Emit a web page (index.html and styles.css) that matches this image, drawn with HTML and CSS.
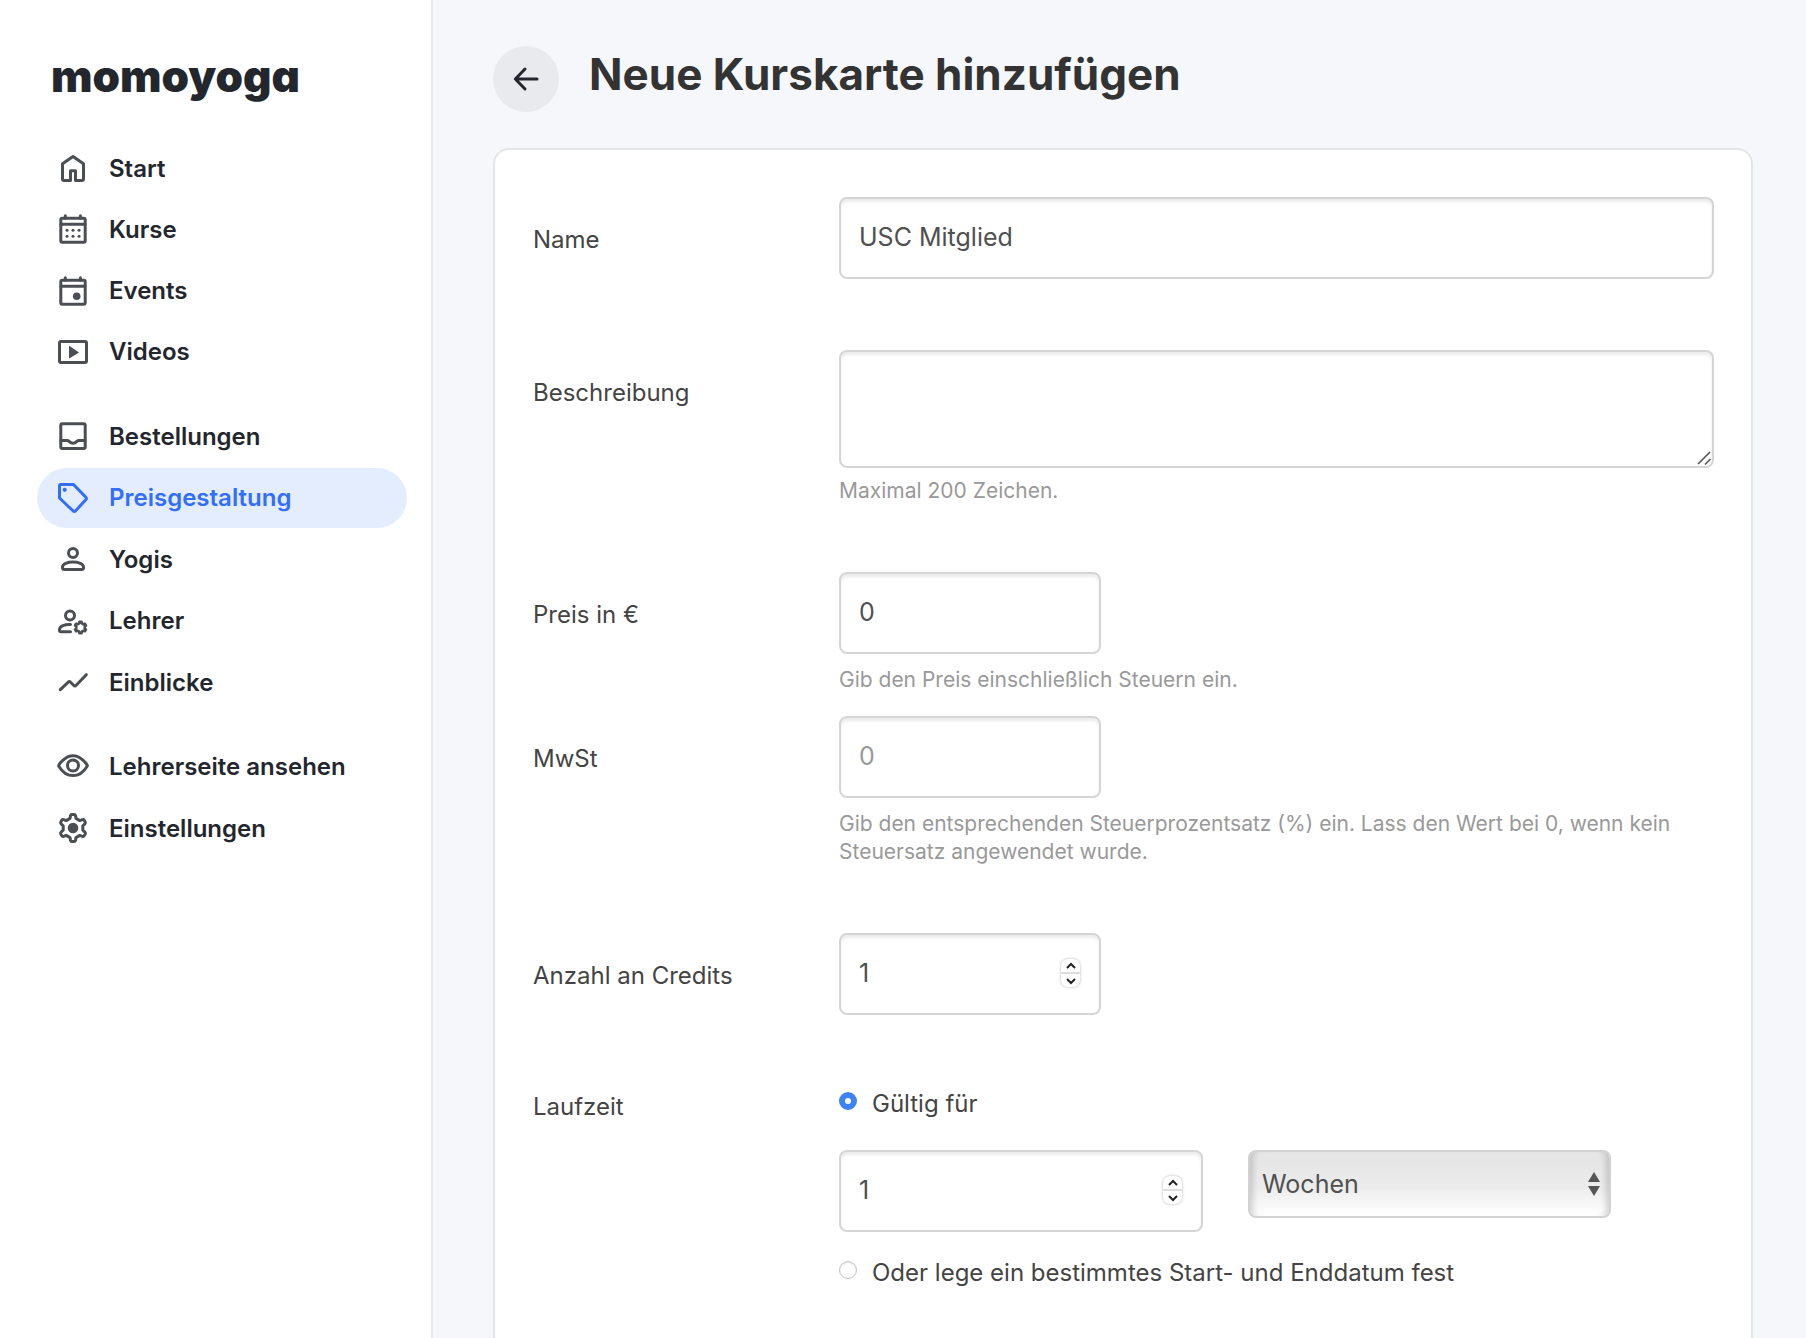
FILE: index.html
```html
<!DOCTYPE html>
<html lang="de">
<head>
<meta charset="utf-8">
<meta name="viewport" content="width=device-width, initial-scale=1">
<title>Neue Kurskarte hinzufügen – momoyoga</title>
<link rel="stylesheet" href="styles.css">
</head>
<body>
<div class="page">
  <aside class="sidebar">
    <a class="logo" href="#">momoyoga</a>
    <nav class="nav">
      <ul class="nav-group nav-group-content">
        <li><a class="nav-link" href="#"><svg class="icon" viewBox="0 0 36 36"><path d="M9 30.500a1.500 1.500 0 0 1-1.500-1.500V13.800L18 6.500l10.500 7.300V29a1.500 1.500 0 0 1-1.500 1.500h-6.500v-9.700h-5v9.700z"/></svg>Start</a></li>
        <li><a class="nav-link" href="#"><svg class="icon" viewBox="0 0 36 36"><rect x="5.800" y="7.300" width="24.400" height="24" rx="1.500"/><path d="M6 13.300h24M10.300 4.800v2.500M25.400 4.800v2.500"/><g class="solid"><circle cx="12" cy="19.300" r="1.500"/><circle cx="18" cy="19.300" r="1.500"/><circle cx="24" cy="19.300" r="1.500"/><circle cx="12" cy="25.300" r="1.500"/><circle cx="18" cy="25.300" r="1.500"/><circle cx="24" cy="25.300" r="1.500"/></g></svg>Kurse</a></li>
        <li><a class="nav-link" href="#"><svg class="icon" viewBox="0 0 36 36"><rect x="5.800" y="7.300" width="24.400" height="24" rx="1.500"/><path d="M6 13.300h24M10.300 4.800v2.500M25.400 4.800v2.500"/><circle class="solid" cx="21.700" cy="23.300" r="3.800"/></svg>Events</a></li>
        <li><a class="nav-link" href="#"><svg class="icon" viewBox="0 0 36 36"><rect x="4.500" y="7.500" width="27" height="21" rx="1.500"/><path class="solid" d="M14 12.500v11.500a.4.4 0 0 0 .6.300L24 18.500 14.600 12z"/></svg>Videos</a></li>
      </ul>
      <ul class="nav-group nav-group-studio">
        <li><a class="nav-link" href="#"><svg class="icon" viewBox="0 0 36 36"><rect x="5.800" y="5.800" width="24.400" height="24.700" rx="1.500"/><path d="M6 22.500h6.500c1.500 0 2 2.700 5.500 2.700s4-2.700 5.500-2.700H30"/></svg>Bestellungen</a></li>
        <li><a class="nav-link active" href="#" aria-current="page"><svg class="icon" viewBox="0 0 36 36"><path d="M6 4.500h12.500L31 17.400a1.500 1.500 0 0 1 0 2L20.400 31a1.500 1.500 0 0 1-2.200 0L4.500 18V6A1.500 1.500 0 0 1 6 4.500z"/><circle class="solid" cx="9.700" cy="9.800" r="2.100"/></svg>Preisgestaltung</a></li>
        <li><a class="nav-link" href="#"><svg class="icon" viewBox="0 0 36 36"><circle cx="18" cy="12" r="4.500"/><path d="M9.500 28.500h17q2 0 2-2v-.5c0-3.300-5-5-10.500-5s-10.500 1.700-10.500 5v.5q0 2 2 2z"/></svg>Yogis</a></li>
        <li><a class="nav-link" href="#"><svg class="icon" viewBox="0 0 36 36"><circle cx="15" cy="12.500" r="4.500"/><path d="M15.500 21.500c-5.500-.3-11 1.500-11 5v.700q0 1.500 1.500 1.500h9.500"/><g transform="translate(25.500 24.500) scale(.43)" stroke-width="6"><path d="M-3-9.600-2.500-13.300H2.500L3-9.600 6.800-7.400 10.300-8.800 12.800-4.500 9.800-2.200V2.200L12.800 4.500 10.300 8.800 6.800 7.400 3 9.600 2.500 13.300H-2.500L-3 9.600-6.800 7.400-10.300 8.800-12.800 4.500-9.800 2.200V-2.200L-12.800-4.500-10.300-8.800-6.800-7.400z"/></g></svg>Lehrer</a></li>
        <li><a class="nav-link" href="#"><svg class="icon" viewBox="0 0 36 36"><path d="M5.300 25.700 13 18.300q1.300-1.300 2.600 0l3 3q1.300 1.300 2.600 0L31.300 10.700"/></svg>Einblicke</a></li>
      </ul>
      <ul class="nav-group">
        <li><a class="nav-link" href="#"><svg class="icon" viewBox="0 0 36 36"><path d="M3.800 18.200C2.800 17 10 7.800 18 7.800S33.200 17 32.200 18.200C30.500 21 25.500 27.600 18 27.600S5.500 21 3.800 18.200z"/><circle cx="18" cy="17.500" r="5.500"/></svg>Lehrerseite ansehen</a></li>
        <li><a class="nav-link" href="#"><svg class="icon" viewBox="0 0 36 36"><path transform="translate(18 18)" d="M-3-9.600-2.500-12.300q.3-1.200 1.500-1.200H1q1.200 0 1.500 1.200L3-9.600 6.800-7.400 9.400-8.300q1.200-.4 1.800.6l1 1.700q.6 1.100-.3 1.900L9.800-2.200V2.200l2.100 1.900q.9.800.3 1.900l-1 1.700q-.6 1-1.800.6L6.800 7.400 3 9.600l-.5 2.700q-.3 1.200-1.500 1.200H-1q-1.200 0-1.500-1.200L-3 9.600-6.800 7.400l-2.600.9q-1.200.4-1.800-.6l-1-1.700q-.6-1.100.3-1.900l2.100-1.900V-2.200l-2.100-1.900q-.9-.8-.3-1.900l1-1.700q.6-1 1.800-.6l2.600.9z"/><circle class="solid" cx="18" cy="18" r="5.300"/></svg>Einstellungen</a></li>
      </ul>
    </nav>
  </aside>

  <main class="main">
    <header class="header">
      <button class="back" type="button" aria-label="Zurück"><svg class="back-icon" viewBox="0 0 30 30"><path d="M26 15H4.500M14 5 4.300 15 14 25"/></svg></button>
      <h1 class="title">Neue Kurskarte hinzufügen</h1>
    </header>

    <form class="card">
      <div class="row row-plain">
        <label class="label" for="name">Name</label>
        <div class="field"><input class="input" id="name" type="text" value="USC Mitglied"></div>
      </div>
      <div class="row">
        <label class="label" for="description">Beschreibung</label>
        <div class="field">
          <textarea class="input textarea" id="description"></textarea>
          <p class="help help-near">Maximal 200 Zeichen.</p>
        </div>
      </div>
      <div class="row row-tight">
        <label class="label" for="price">Preis in €</label>
        <div class="field">
          <input class="input short" id="price" type="text" value="0">
          <p class="help">Gib den Preis einschließlich Steuern ein.</p>
        </div>
      </div>
      <div class="row">
        <label class="label" for="vat">MwSt</label>
        <div class="field">
          <input class="input short" id="vat" type="text" placeholder="0">
          <p class="help">Gib den entsprechenden Steuerprozentsatz (%) ein. Lass den Wert bei 0, wenn kein Steuersatz angewendet wurde.</p>
        </div>
      </div>
      <div class="row row-plain">
        <label class="label" for="credits">Anzahl an Credits</label>
        <div class="field">
          <div class="number short">
            <input class="input" id="credits" type="number" value="1">
            <span class="spinner"><button class="step" type="button" aria-label="Mehr Credits"><svg viewBox="0 0 12 8"><path d="M2 6l4-4 4 4"/></svg></button><button class="step" type="button" aria-label="Weniger Credits"><svg viewBox="0 0 12 8"><path d="M2 2l4 4 4-4"/></svg></button></span>
          </div>
        </div>
      </div>
      <div class="row" role="radiogroup" aria-labelledby="term">
        <span class="label label-top" id="term">Laufzeit</span>
        <div class="field">
          <label class="choice"><input class="radio" type="radio" name="term" checked>Gültig für</label>
          <div class="duration">
            <div class="number">
              <input class="input" type="number" value="1" aria-label="Dauer">
              <span class="spinner"><button class="step" type="button" aria-label="Länger"><svg viewBox="0 0 12 8"><path d="M2 6l4-4 4 4"/></svg></button><button class="step" type="button" aria-label="Kürzer"><svg viewBox="0 0 12 8"><path d="M2 2l4 4 4-4"/></svg></button></span>
            </div>
            <div class="unit">
              <select class="select" aria-label="Einheit"><option>Wochen</option><option>Monate</option></select>
              <svg class="unit-arrows" viewBox="0 0 12 24"><path d="M6 0l6 10H0zM6 24L0 14h12z"/></svg>
            </div>
          </div>
          <label class="choice"><input class="radio" type="radio" name="term">Oder lege ein bestimmtes Start- und Enddatum fest</label>
        </div>
      </div>
    </form>
  </main>
</div>
</body>
</html>
```

FILE: styles.css
```css
* {
  box-sizing: border-box;
}

body {
  margin: 0;
  font-family: Inter, "Liberation Sans", sans-serif;
  font-size: 24px;
  color: #444;
  background: #f5f7fb;
}

button,
input,
select,
textarea {
  font: inherit;
  margin: 0;
}

.page {
  display: flex;
  min-height: 100vh;
}

/* Sidebar */
.sidebar {
  flex: 0 0 433px;
  padding: 46px 24px 24px 37px;
  background: #fff;
  border-right: 2px solid #e6e8ed;
}

.logo {
  display: block;
  margin-bottom: 32px;
  padding-left: 14px;
  font-size: 44px;
  line-height: 60px;
  font-weight: 900;
  font-feature-settings: "cv11";
  color: #23272d;
  text-decoration: none;
}

.nav {
  display: flex;
  flex-direction: column;
  gap: 24px;
}

.nav-group {
  display: flex;
  flex-direction: column;
  justify-content: space-between;
  min-height: 122px;
  margin: 0;
  padding: 0;
  list-style: none;
}

.nav-group-content {
  min-height: 244px;
}

.nav-group-studio {
  min-height: 306px;
}

.nav-link {
  display: flex;
  align-items: center;
  gap: 18px;
  height: 60px;
  padding: 0 18px;
  border-radius: 30px;
  font-weight: 600;
  color: #23272d;
  text-decoration: none;
}

.nav-link.active {
  color: #336dff;
  background: #e3edfe;
}

.icon {
  flex: none;
  width: 36px;
  height: 36px;
  fill: none;
  stroke: #4b4f54;
  stroke-width: 3;
  stroke-linecap: round;
  stroke-linejoin: round;
}

.icon .solid {
  fill: #4b4f54;
  stroke: none;
}

.active .icon {
  stroke: #336dff;
}

.active .icon .solid {
  fill: #336dff;
}

/* Main column */
.main {
  flex: 1;
  min-width: 0;
  display: flex;
  flex-direction: column;
  padding: 46px 53px 0 60px;
}

.header {
  display: flex;
  align-items: flex-start;
  gap: 30px;
  margin-bottom: 36px;
}

.back {
  display: grid;
  place-items: center;
  width: 66px;
  height: 66px;
  padding: 0;
  border: 0;
  border-radius: 50%;
  background: #e8eaee;
}

.back-icon {
  width: 30px;
  height: 30px;
  fill: none;
  stroke: #23272d;
  stroke-width: 3;
  stroke-linecap: round;
  stroke-linejoin: round;
}

.title {
  margin: 0;
  font-size: 44px;
  line-height: 56px;
  font-weight: 700;
  color: #333;
}

.card {
  flex: 1;
  padding: 47px 37px 40px 38px;
  background: #fff;
  border: 2px solid #e4e5e7;
  border-bottom: 0;
  border-radius: 16px 16px 0 0;
}

.row {
  display: grid;
  grid-template-columns: 306px minmax(0, 1fr);
  align-items: start;
  margin-bottom: 67px;
}

.row-plain {
  margin-bottom: 71px;
}

.row-tight {
  margin-bottom: 22px;
}

.row:last-child {
  margin-bottom: 0;
}

.label {
  padding-top: 29px;
  line-height: 28px;
}

.label-top {
  padding-top: 7px;
}

.input {
  display: block;
  width: 100%;
  height: 82px;
  padding: 0 18px 2px;
  border: 2px solid #d5d5d5;
  border-radius: 8px;
  font-size: 25px;
  color: #505050;
  background: #fff;
  box-shadow: inset 0 3px 3px rgba(0, 0, 0, 0.08);
}

.input::placeholder {
  color: #999;
}

.textarea {
  height: 118px;
  padding: 18px;
  resize: vertical;
}

.textarea::-webkit-resizer {
  background: url("data:image/svg+xml,%3Csvg xmlns='http://www.w3.org/2000/svg' viewBox='0 0 15 15'%3E%3Cpath d='M1 13 13 1M8 13.500 13.500 8' fill='none' stroke='%23555' stroke-width='1.600'/%3E%3C/svg%3E") center / 100% no-repeat;
}

.short {
  width: 262px;
}

.help {
  margin: 12px 0 0;
  font-size: 21px;
  line-height: 28px;
  color: #999;
}

.help-near {
  margin-top: 9px;
}

.number {
  position: relative;
}

.number .input {
  appearance: textfield;
}

.number .input::-webkit-inner-spin-button {
  appearance: none;
}

.spinner {
  position: absolute;
  top: 26px;
  right: 21px;
  display: flex;
  flex-direction: column;
  width: 19px;
  height: 28px;
  border-radius: 7px;
  background: #fff;
  box-shadow: 0 0 3px rgba(0, 0, 0, 0.3);
}

.step {
  flex: 1;
  display: grid;
  place-items: center;
  padding: 0;
  border: 0;
  background: none;
}

.step + .step {
  border-top: 2px solid #ddd;
}

.step svg {
  width: 12px;
  height: 8px;
  fill: none;
  stroke: #222;
  stroke-width: 2;
}

.choice {
  display: flex;
  align-items: center;
  gap: 15px;
  line-height: 36px;
}

.radio {
  appearance: none;
  width: 18px;
  height: 18px;
  margin-bottom: 6px;
  border: 1px solid #c4c4c4;
  border-radius: 50%;
  background: #fff;
  box-shadow: inset 0 1px 2px rgba(0, 0, 0, 0.12);
}

.radio:checked {
  border: 6px solid #3d82f8;
  box-shadow: none;
}

.duration {
  display: grid;
  grid-template-columns: 364px 363px;
  align-items: start;
  gap: 45px;
  margin: 28px 0 23px;
}

.unit {
  position: relative;
}

.select {
  appearance: none;
  display: block;
  width: 100%;
  height: 68px;
  padding: 0 36px 0 12px;
  border: 2px solid #d2d2d2;
  border-radius: 8px;
  font-size: 25px;
  color: #505050;
  background: linear-gradient(#e6e6e6 20%, #ececec 55%, #fff);
  box-shadow: inset 8px 0 6px -5px rgba(0, 0, 0, 0.16), inset -8px 0 6px -5px rgba(0, 0, 0, 0.16);
}

.unit-arrows {
  position: absolute;
  top: 22px;
  right: 11px;
  width: 12px;
  height: 24px;
  fill: #555;
  pointer-events: none;
}
```
